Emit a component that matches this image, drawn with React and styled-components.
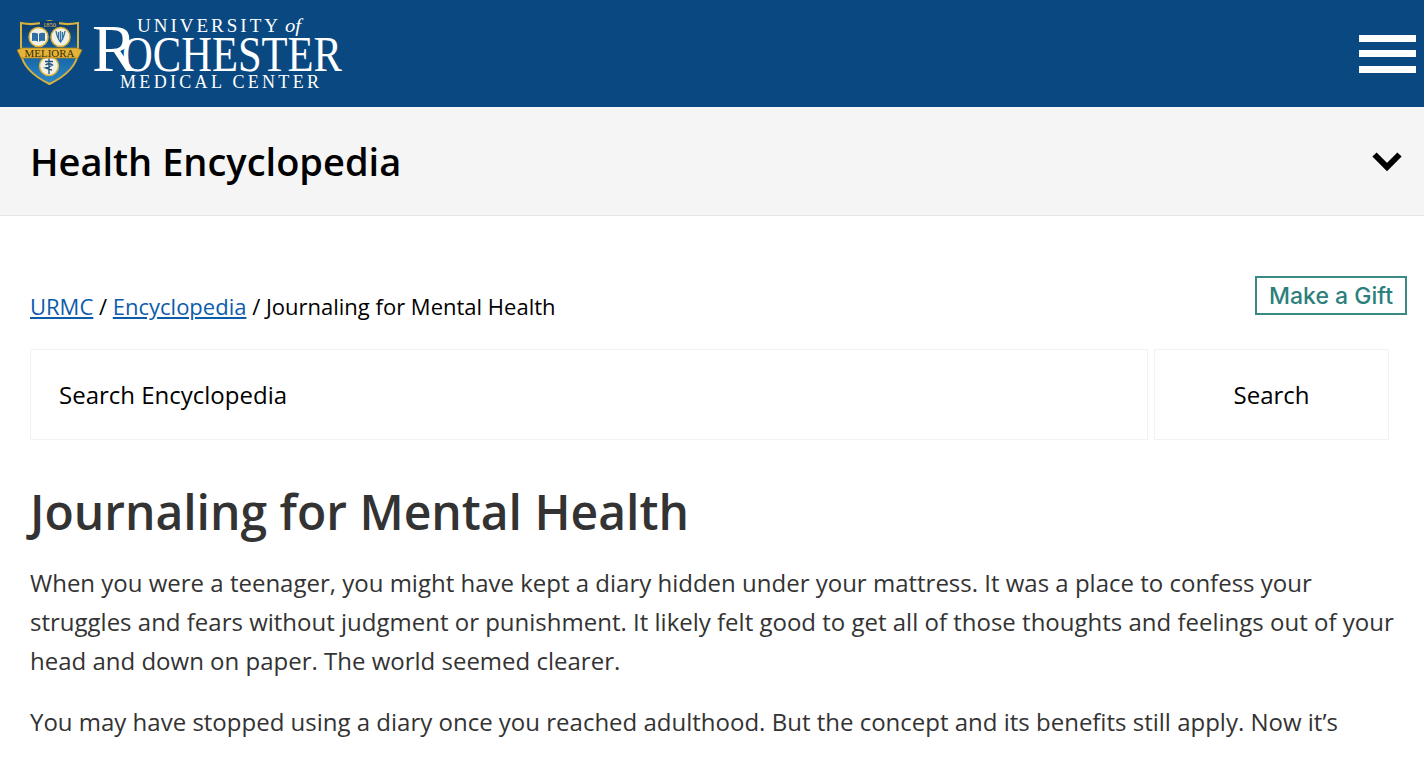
import React from "react";
import styled, { createGlobalStyle } from "styled-components";

const GlobalStyle = createGlobalStyle`
  html, body {
    margin: 0;
    padding: 0;
    height: 761px;
    overflow: hidden;
    background: #fff;
  }
  body {
    font-family: "Open Sans", "Liberation Sans", sans-serif;
    color: #333;
  }
  * {
    box-sizing: border-box;
  }
`;

const Header = styled.header`
  height: 107px;
  background: #0a4881;
  display: flex;
  align-items: center;
  justify-content: space-between;
  padding: 0 8px 0 17px;
`;

const Burger = styled.button`
  width: 57px;
  height: 38px;
  padding: 0;
  border: 0;
  background: transparent;
  display: flex;
  flex-direction: column;
  justify-content: space-between;
  span {
    display: block;
    height: 7px;
    background: #fff;
  }
`;

const SubBar = styled.div`
  height: 109px;
  background: #f5f5f5;
  border-bottom: 1px solid #e6e6e6;
  display: flex;
  align-items: center;
  justify-content: space-between;
  padding: 0 20px 0 30px;
`;

const SubTitle = styled.div`
  font-size: 38px;
  font-weight: 600;
  color: #000;
  line-height: 1;
`;

const Content = styled.main`
  padding: 60px 29px 0 30px;
`;

const CrumbRow = styled.div`
  display: flex;
  justify-content: space-between;
  align-items: flex-start;
  margin-right: -12px;
  height: 73px;
`;

const Crumbs = styled.nav`
  font-size: 22px;
  line-height: 30px;
  color: #000;
  padding-top: 15px;
  a {
    color: #0b5cab;
    text-decoration: underline;
  }
`;

const GiftLink = styled.a`
  display: flex;
  align-items: center;
  justify-content: center;
  width: 152px;
  height: 39px;
  border: 2px solid #3a8985;
  color: #2d7f7b;
  font-family: Inter, "Open Sans", sans-serif;
  font-size: 23px;
  font-weight: 500;
`;

const SearchRow = styled.form`
  display: flex;
  gap: 6px;
  height: 91px;
`;

const SearchInput = styled.div`
  width: 1118px;
  border: 1px solid #f2f2f2;
  display: flex;
  align-items: center;
  padding-left: 28px;
  font-size: 24px;
  color: #000;
`;

const SearchButton = styled.div`
  width: 235px;
  border: 1px solid #f2f2f2;
  display: flex;
  align-items: center;
  justify-content: center;
  font-size: 24px;
  color: #000;
`;

const Title = styled.h1`
  margin: 39px 0 0;
  font-size: 48px;
  line-height: 66px;
  font-weight: 600;
  color: #333;
`;

const Para = styled.p`
  margin: 0 0 22px;
  font-size: 24px;
  line-height: 39px;
  color: #333;
`;

const Body = styled.div`
  margin-top: 18px;
`;

const Logo = () => (
  <svg width="326" height="74" viewBox="17 14 326 74" role="img" aria-label="University of Rochester Medical Center">
    <defs>
      <linearGradient id="shield" x1="0" y1="0" x2="0" y2="1">
        <stop offset="0" stopColor="#0d3a66" />
        <stop offset="0.55" stopColor="#1565a8" />
        <stop offset="1" stopColor="#2a88c8" />
      </linearGradient>
    </defs>
    <path d="M21 20 Q35 23 49.500 18 Q64 23 78 20 L78 50 Q76 68 49.500 81 Q23 68 21 50 Z" fill="url(#shield)" stroke="#d9b23c" strokeWidth="2" />
    <rect x="40" y="18" width="19" height="6" fill="#0b3d6e" />
    <text x="49.500" y="23.500" textAnchor="middle" fontFamily="Liberation Serif" fontSize="6.500" fill="#e6c65a">1850</text>
    <circle cx="38.500" cy="34" r="9.500" fill="#f3f1e4" stroke="#d9b23c" strokeWidth="1.500" />
    <path d="M32 30 Q35.500 29 38.500 31 Q41.500 29 45 30 V38 Q41.500 37 38.500 39 Q35.500 37 32 38 Z" fill="#2f6fa8" />
    <path d="M38.500 31 V39" stroke="#f3f1e4" strokeWidth="1" />
    <circle cx="60.500" cy="34" r="9.500" fill="#f3f1e4" stroke="#d9b23c" strokeWidth="1.500" />
    <path d="M56 28 Q57 35 60.500 39 Q64 35 65 28 M58.500 29 V37 M60.500 28 V39 M62.500 29 V37" fill="none" stroke="#2f6fa8" strokeWidth="1.300" />
    <circle cx="49" cy="63" r="9.500" fill="#f3f1e4" stroke="#d9b23c" strokeWidth="1.500" />
    <path d="M49 55.500 V71 M45 58.500 H53 M45.500 62 Q49 59.500 52.500 62 Q49 64.500 45.500 65 Q49 66.500 52 67" fill="none" stroke="#1b4f80" strokeWidth="1.300" />
    <path d="M17 47 L22 45 H77 L82 47 L78 55 H21 Z" fill="#e3b437" stroke="#a97f1c" strokeWidth="0.800" />
    <text x="49.500" y="54" textAnchor="middle" fontFamily="Liberation Serif" fontSize="10.500" textLength="50" lengthAdjust="spacingAndGlyphs" fill="#3a2c08">MELIORA</text>

    <g fontFamily="Liberation Serif" fill="#fff">
      <text x="137" y="29" fontSize="19" textLength="141" lengthAdjust="spacing">UNIVERSITY</text>
      <text x="285" y="29" fontSize="19" fontStyle="italic" textLength="16" lengthAdjust="spacingAndGlyphs">of</text>
      <text x="92" y="68" fontSize="68" textLength="45" lengthAdjust="spacingAndGlyphs">R</text>
      <text x="122" y="68" fontSize="50" textLength="220" lengthAdjust="spacingAndGlyphs">OCHESTER</text>
      <text x="120" y="85" fontSize="18" textLength="199" lengthAdjust="spacing">MEDICAL CENTER</text>
    </g>
  </svg>
);

const Chevron = () => (
  <svg width="34" height="24" viewBox="0 0 34 24">
    <path d="M4.500 5.500 L17 18 L29.500 5.500" fill="none" stroke="#000" strokeWidth="6" />
  </svg>
);

const App = () => (
  <>
    <GlobalStyle />
    <Header>
      <Logo />
      <Burger aria-label="Menu">
        <span />
        <span />
        <span />
      </Burger>
    </Header>
    <SubBar>
      <SubTitle>Health Encyclopedia</SubTitle>
      <Chevron />
    </SubBar>
    <Content>
      <CrumbRow>
        <Crumbs>
          <a href="#urmc">URMC</a> / <a href="#encyclopedia">Encyclopedia</a> / Journaling for Mental Health
        </Crumbs>
        <GiftLink>Make a Gift</GiftLink>
      </CrumbRow>
      <SearchRow>
        <SearchInput>Search Encyclopedia</SearchInput>
        <SearchButton>Search</SearchButton>
      </SearchRow>
      <Title>Journaling for Mental Health</Title>
      <Body>
        <Para>
          When you were a teenager, you might have kept a diary hidden under your mattress. It was a place to confess
          your struggles and fears without judgment or punishment. It likely felt good to get all of those thoughts and
          feelings out of your head and down on paper. The world seemed clearer.
        </Para>
        <Para>
          You may have stopped using a diary once you reached adulthood. But the concept and its benefits still apply.
          Now it’s
        </Para>
      </Body>
    </Content>
  </>
);

export default App;
